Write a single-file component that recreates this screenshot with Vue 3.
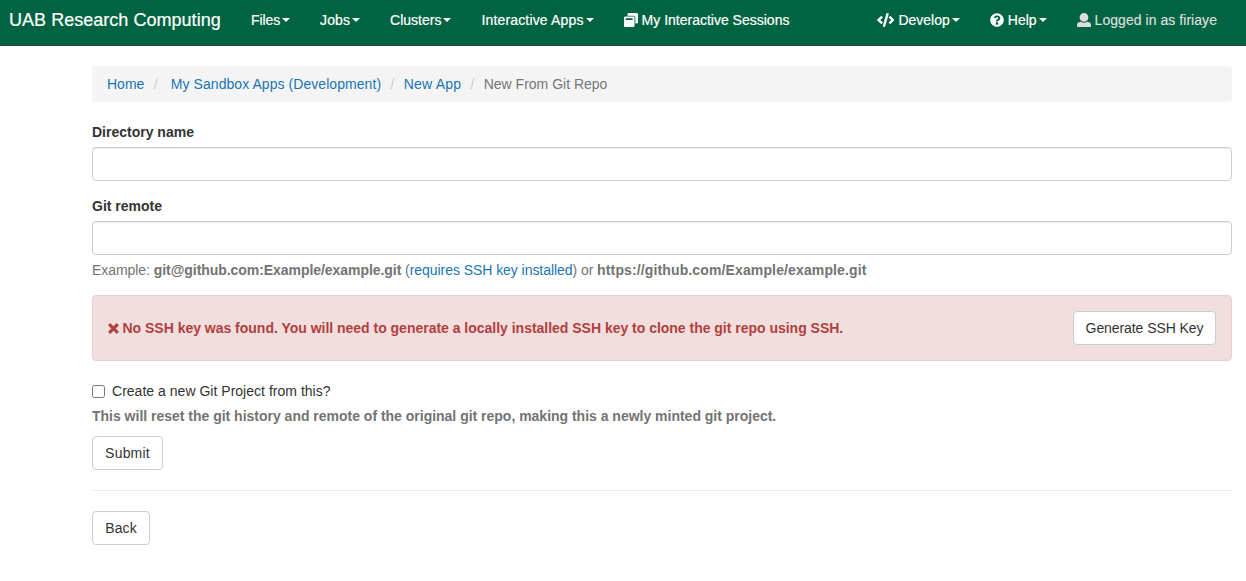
<script setup>
const icons = {
  windows: {
    box: '0 0 512 512',
    w: 14,
    d: 'M512 48v288c0 26.5-21.5 48-48 48h-48V176c0-44.1-35.9-80-80-80H128V48c0-26.5 21.5-48 48-48h288c26.5 0 48 21.5 48 48zM384 176v288c0 26.5-21.5 48-48 48H48c-26.5 0-48-21.5-48-48V176c0-26.5 21.5-48 48-48h288c26.5 0 48 21.5 48 48zm-68 28c0-6.6-5.4-12-12-12H76c-6.6 0-12 5.4-12 12v52h252v-52z',
  },
  code: {
    box: '0 0 640 512',
    w: 17.5,
    d: 'M278.9 511.5l-61-17.7c-6.4-1.8-10-8.5-8.2-14.9L346.2 8.7c1.8-6.4 8.5-10 14.9-8.2l61 17.7c6.4 1.8 10 8.5 8.2 14.9L293.8 503.3c-1.9 6.4-8.5 10.1-14.9 8.2zm-114-112.2l43.5-46.4c4.6-4.9 4.3-12.7-.8-17.2L117 256l90.6-79.7c5.1-4.5 5.5-12.3.8-17.2l-43.5-46.4c-4.5-4.8-12.1-5.1-17-.5L3.8 247.2c-5.1 4.7-5.1 12.8 0 17.5l144.1 135.1c4.9 4.6 12.5 4.4 17-.5zm327.2.6l144.1-135.1c5.1-4.7 5.1-12.8 0-17.5L492.1 112.1c-4.8-4.5-12.4-4.3-17 .5L431.6 159c-4.6 4.9-4.3 12.7.8 17.2L523 256l-90.6 79.7c-5.1 4.5-5.5 12.3-.8 17.2l43.5 46.4c4.5 4.9 12.1 5.1 17 .6z',
  },
  help: {
    box: '0 0 512 512',
    w: 14,
    d: 'M504 256c0 136.997-111.043 248-248 248S8 392.997 8 256C8 119.083 119.043 8 256 8s248 111.083 248 248zM262.655 90c-54.497 0-89.255 22.957-116.549 63.758-3.536 5.286-2.353 12.415 2.715 16.258l34.699 26.31c5.205 3.947 12.621 3.008 16.665-2.122 17.864-22.658 30.113-35.797 57.303-35.797 20.429 0 45.698 13.148 45.698 32.958 0 14.976-12.363 22.667-32.534 33.976C247.128 238.528 216 254.941 216 296v4c0 6.627 5.373 12 12 12h56c6.627 0 12-5.373 12-12v-1.333c0-28.462 83.186-29.647 83.186-106.667 0-58.002-60.165-102-116.531-102zM256 338c-25.365 0-46 20.635-46 46 0 25.364 20.635 46 46 46s46-20.636 46-46c0-25.365-20.635-46-46-46z',
  },
  user: {
    box: '0 0 512 512',
    w: 14,
    d: 'M256 0c88.366 0 160 71.634 160 160s-71.634 160-160 160S96 248.366 96 160 167.634 0 256 0zm183.283 333.821l-71.313-17.828c-74.923 53.89-165.738 41.864-223.94 0l-71.313 17.828C29.981 344.505 0 382.903 0 426.955V464c0 26.51 21.49 48 48 48h416c26.51 0 48-21.49 48-48v-37.045c0-44.052-29.981-82.45-72.717-93.134z',
  },
}

const leftNav = [
  { id: 'files', label: 'Files', caret: true },
  { id: 'jobs', label: 'Jobs', caret: true },
  { id: 'clusters', label: 'Clusters', caret: true },
  { id: 'apps', label: 'Interactive Apps', caret: true },
  { id: 'sessions', label: 'My Interactive Sessions', icon: icons.windows },
]
const rightNav = [
  { id: 'develop', label: 'Develop', icon: icons.code, caret: true },
  { id: 'help', label: 'Help', icon: icons.help, caret: true },
  { id: 'user', label: 'Logged in as firiaye', icon: icons.user },
]
</script>

<template>
  <nav class="navbar">
    <a class="brand">UAB Research Computing</a>
    <ul v-for="(group, i) in [leftNav, rightNav]" :key="i" class="nav" :class="{ right: i === 1 }">
      <li v-for="item in group" :key="item.id" :class="['nav-item', item.id]">
        <svg v-if="item.icon" class="icon" :viewBox="item.icon.box" :width="item.icon.w" height="14">
          <path :d="item.icon.d" />
        </svg>
        <span class="label">{{ item.label }}</span>
        <span v-if="item.caret" class="caret"></span>
      </li>
    </ul>
  </nav>

  <main class="content">
    <ol class="breadcrumb">
      <li><a>Home</a></li>
      <li class="wide"><a class="sandbox">My Sandbox Apps (Development)</a></li>
      <li><a class="new-app">New App</a></li>
      <li>New From Git Repo</li>
    </ol>

    <form @submit.prevent>
      <div class="group">
        <label class="field-label dir" for="dir">Directory name</label>
        <input id="dir" class="control" type="text" />
      </div>
      <div class="group">
        <label class="field-label" for="remote">Git remote</label>
        <input id="remote" class="control" type="text" />
        <p class="hint example">Example: <b>git@github.com:Example/example.git</b> (<a>requires SSH key installed</a>) or <b class="https">https://github.com/Example/example.git</b></p>
      </div>

      <div class="alert">
        <svg class="cross" viewBox="0 0 11 11" width="11" height="11">
          <path d="M2.3 2.3L8.7 8.7M8.7 2.3L2.3 8.7" />
        </svg>
        <strong>No SSH key was found. You will need to generate a locally installed SSH key to clone the git repo using SSH.</strong>
        <button type="button" class="btn generate">Generate SSH Key</button>
      </div>

      <label class="check"><input type="checkbox" /><span>Create a new Git Project from this?</span></label>
      <p class="hint reset"><b>This will reset the git history and remote of the original git repo, making this a newly minted git project.</b></p>
      <button type="submit" class="btn submit">Submit</button>
    </form>
    <hr />
    <button type="button" class="btn back">Back</button>
  </main>
</template>

<style>
body {
  background: #fff;
}
</style>

<style scoped>
.navbar,
.content {
  font-family: "Liberation Sans", Arial, sans-serif;
  font-size: 14px;
  line-height: 20px;
  color: #333;
  white-space: nowrap;
}
.navbar {
  display: flex;
  box-sizing: border-box;
  height: 46px;
  background: #006341;
  border-bottom: 1px solid #1f4d3d;
  color: #fff;
}
.brand {
  width: 227px;
  padding: 10px 0 0 9px;
  font-size: 18px;
  letter-spacing: 0.03px;
  -webkit-text-stroke: 0.2px;
}
.nav {
  display: flex;
  margin: 0;
  padding: 0;
  list-style: none;
}
.nav.right {
  margin-left: auto;
  margin-right: 14px;
}
.nav-item {
  display: flex;
  align-items: center;
  height: 20px;
  padding: 10px 15px;
  -webkit-text-stroke: 0.2px;
}
.files {
  letter-spacing: -0.1px;
}
.jobs {
  letter-spacing: 0.1px;
}
.apps {
  letter-spacing: 0.16px;
}
.user {
  letter-spacing: 0.05px;
  color: #ddd;
}
.icon {
  flex: none;
  margin-right: 4px;
  fill: currentColor;
}
.caret {
  margin-left: 2px;
  border-top: 4px solid;
  border-left: 4px solid transparent;
  border-right: 4px solid transparent;
}
.content {
  padding: 20px 14px 0 92px;
}
a {
  color: #1a75b3;
}
.brand {
  color: #fff;
}
.breadcrumb {
  display: flex;
  margin: 0 0 20px;
  padding: 8px 15px;
  list-style: none;
  background: #f4f4f4;
  border-radius: 4px;
  color: #777;
}
.breadcrumb li + li::before {
  content: "/";
  padding: 0 9.3px;
  color: #ccc;
}
.breadcrumb .wide::before {
  padding-right: 13.3px;
}
.sandbox {
  letter-spacing: 0.06px;
}
.new-app {
  letter-spacing: 0.22px;
}
.group {
  margin-bottom: 15px;
}
.field-label {
  display: block;
  margin-bottom: 5px;
  font-weight: 700;
}
.control {
  display: block;
  box-sizing: border-box;
  width: 100%;
  height: 34px;
  border: 1px solid #ccc;
  border-radius: 4px;
  box-shadow: inset 0 1px 1px rgba(0, 0, 0, 0.075);
}
.hint {
  margin: 5px 0 0;
  color: #737373;
}
.example {
  letter-spacing: -0.055px;
}
.https {
  letter-spacing: 0.13px;
}
.alert {
  display: flex;
  align-items: center;
  box-sizing: border-box;
  height: 66px;
  margin-bottom: 20px;
  padding: 0 15px 0 14.5px;
  background: #f3dede;
  border: 1px solid #ebccd1;
  border-radius: 4px;
  color: #b04040;
  letter-spacing: -0.014px;
}
.cross {
  margin-right: 4px;
  stroke: currentColor;
  stroke-width: 3.2;
  stroke-linecap: square;
}
.btn {
  box-sizing: border-box;
  height: 34px;
  padding: 0;
  border: 1px solid #ccc;
  border-radius: 4px;
  background: #fff;
  font: inherit;
  color: #333;
}
.generate {
  width: 143px;
  margin-left: auto;
  letter-spacing: -0.08px;
}
.check {
  display: flex;
  align-items: center;
  letter-spacing: 0.02px;
}
.check input {
  width: 13px;
  height: 13px;
  margin: 1px 7px 0 0;
}
.reset {
  margin: 5px 0 10px;
  letter-spacing: -0.01px;
}
.submit {
  display: block;
  width: 71px;
  letter-spacing: 0.2px;
}
.back {
  width: 58px;
  letter-spacing: 0.1px;
}
hr {
  margin: 20px 0;
  border: 0;
  border-top: 1px solid #eee;
}
</style>
